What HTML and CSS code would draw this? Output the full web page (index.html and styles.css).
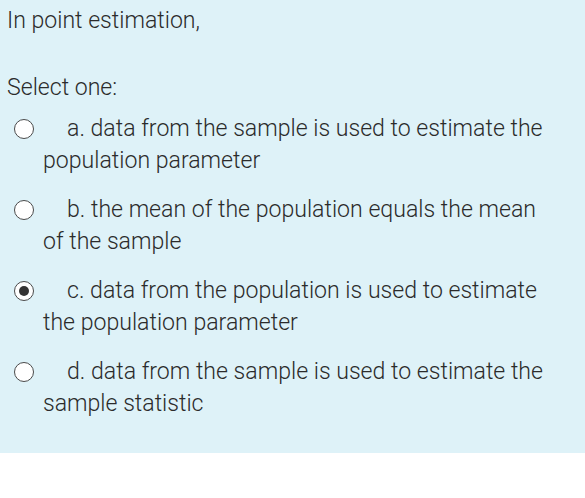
FILE: index.html
```html
<!DOCTYPE html>
<html>
<head>
<meta charset="utf-8">
<link rel="stylesheet" href="styles.css">
</head>
<body>
<div class="formulation">
  <div class="qtext">In point estimation,</div>
  <div class="prompt">Select one:</div>
  <div class="answers">
    <div class="option"><span class="radio"></span><span class="label">a. data from the sample is used to estimate the population parameter</span></div>
    <div class="option"><span class="radio"></span><span class="label">b. the mean of the population equals the mean of the sample</span></div>
    <div class="option"><span class="radio checked"></span><span class="label">c. data from the population is used to estimate the population parameter</span></div>
    <div class="option"><span class="radio"></span><span class="label">d. data from the sample is used to estimate the sample statistic</span></div>
  </div>
</div>
</body>
</html>
```
FILE: styles.css
```css
html, body {
  margin: 0;
  padding: 0;
  background: #ffffff;
}
body {
  font-family: Roboto, "Liberation Sans", sans-serif;
  font-size: 23.1px;
  font-weight: 300;
  line-height: 32px;
  color: #2b2b2b;
}
.formulation {
  background: #def2f8;
  padding: 5px 30px 33px 7px;
}
.qtext {
  margin-bottom: 35px;
}
.prompt {
  margin-bottom: 9px;
}
.answers {
  display: flex;
  flex-direction: column;
  gap: 17px;
}
.option {
  padding-left: 36px;
  text-indent: -29px;
}
.radio {
  display: inline-block;
  width: 20px;
  height: 20px;
  box-sizing: border-box;
  border: 1.5px solid #4a4a4a;
  border-radius: 50%;
  background: #ffffff;
  vertical-align: -3px;
  margin-right: 33px;
  position: relative;
}
.radio.checked::after {
  content: "";
  position: absolute;
  left: 3.5px;
  top: 3.5px;
  width: 10px;
  height: 10px;
  border-radius: 50%;
  background: #333333;
}
```
